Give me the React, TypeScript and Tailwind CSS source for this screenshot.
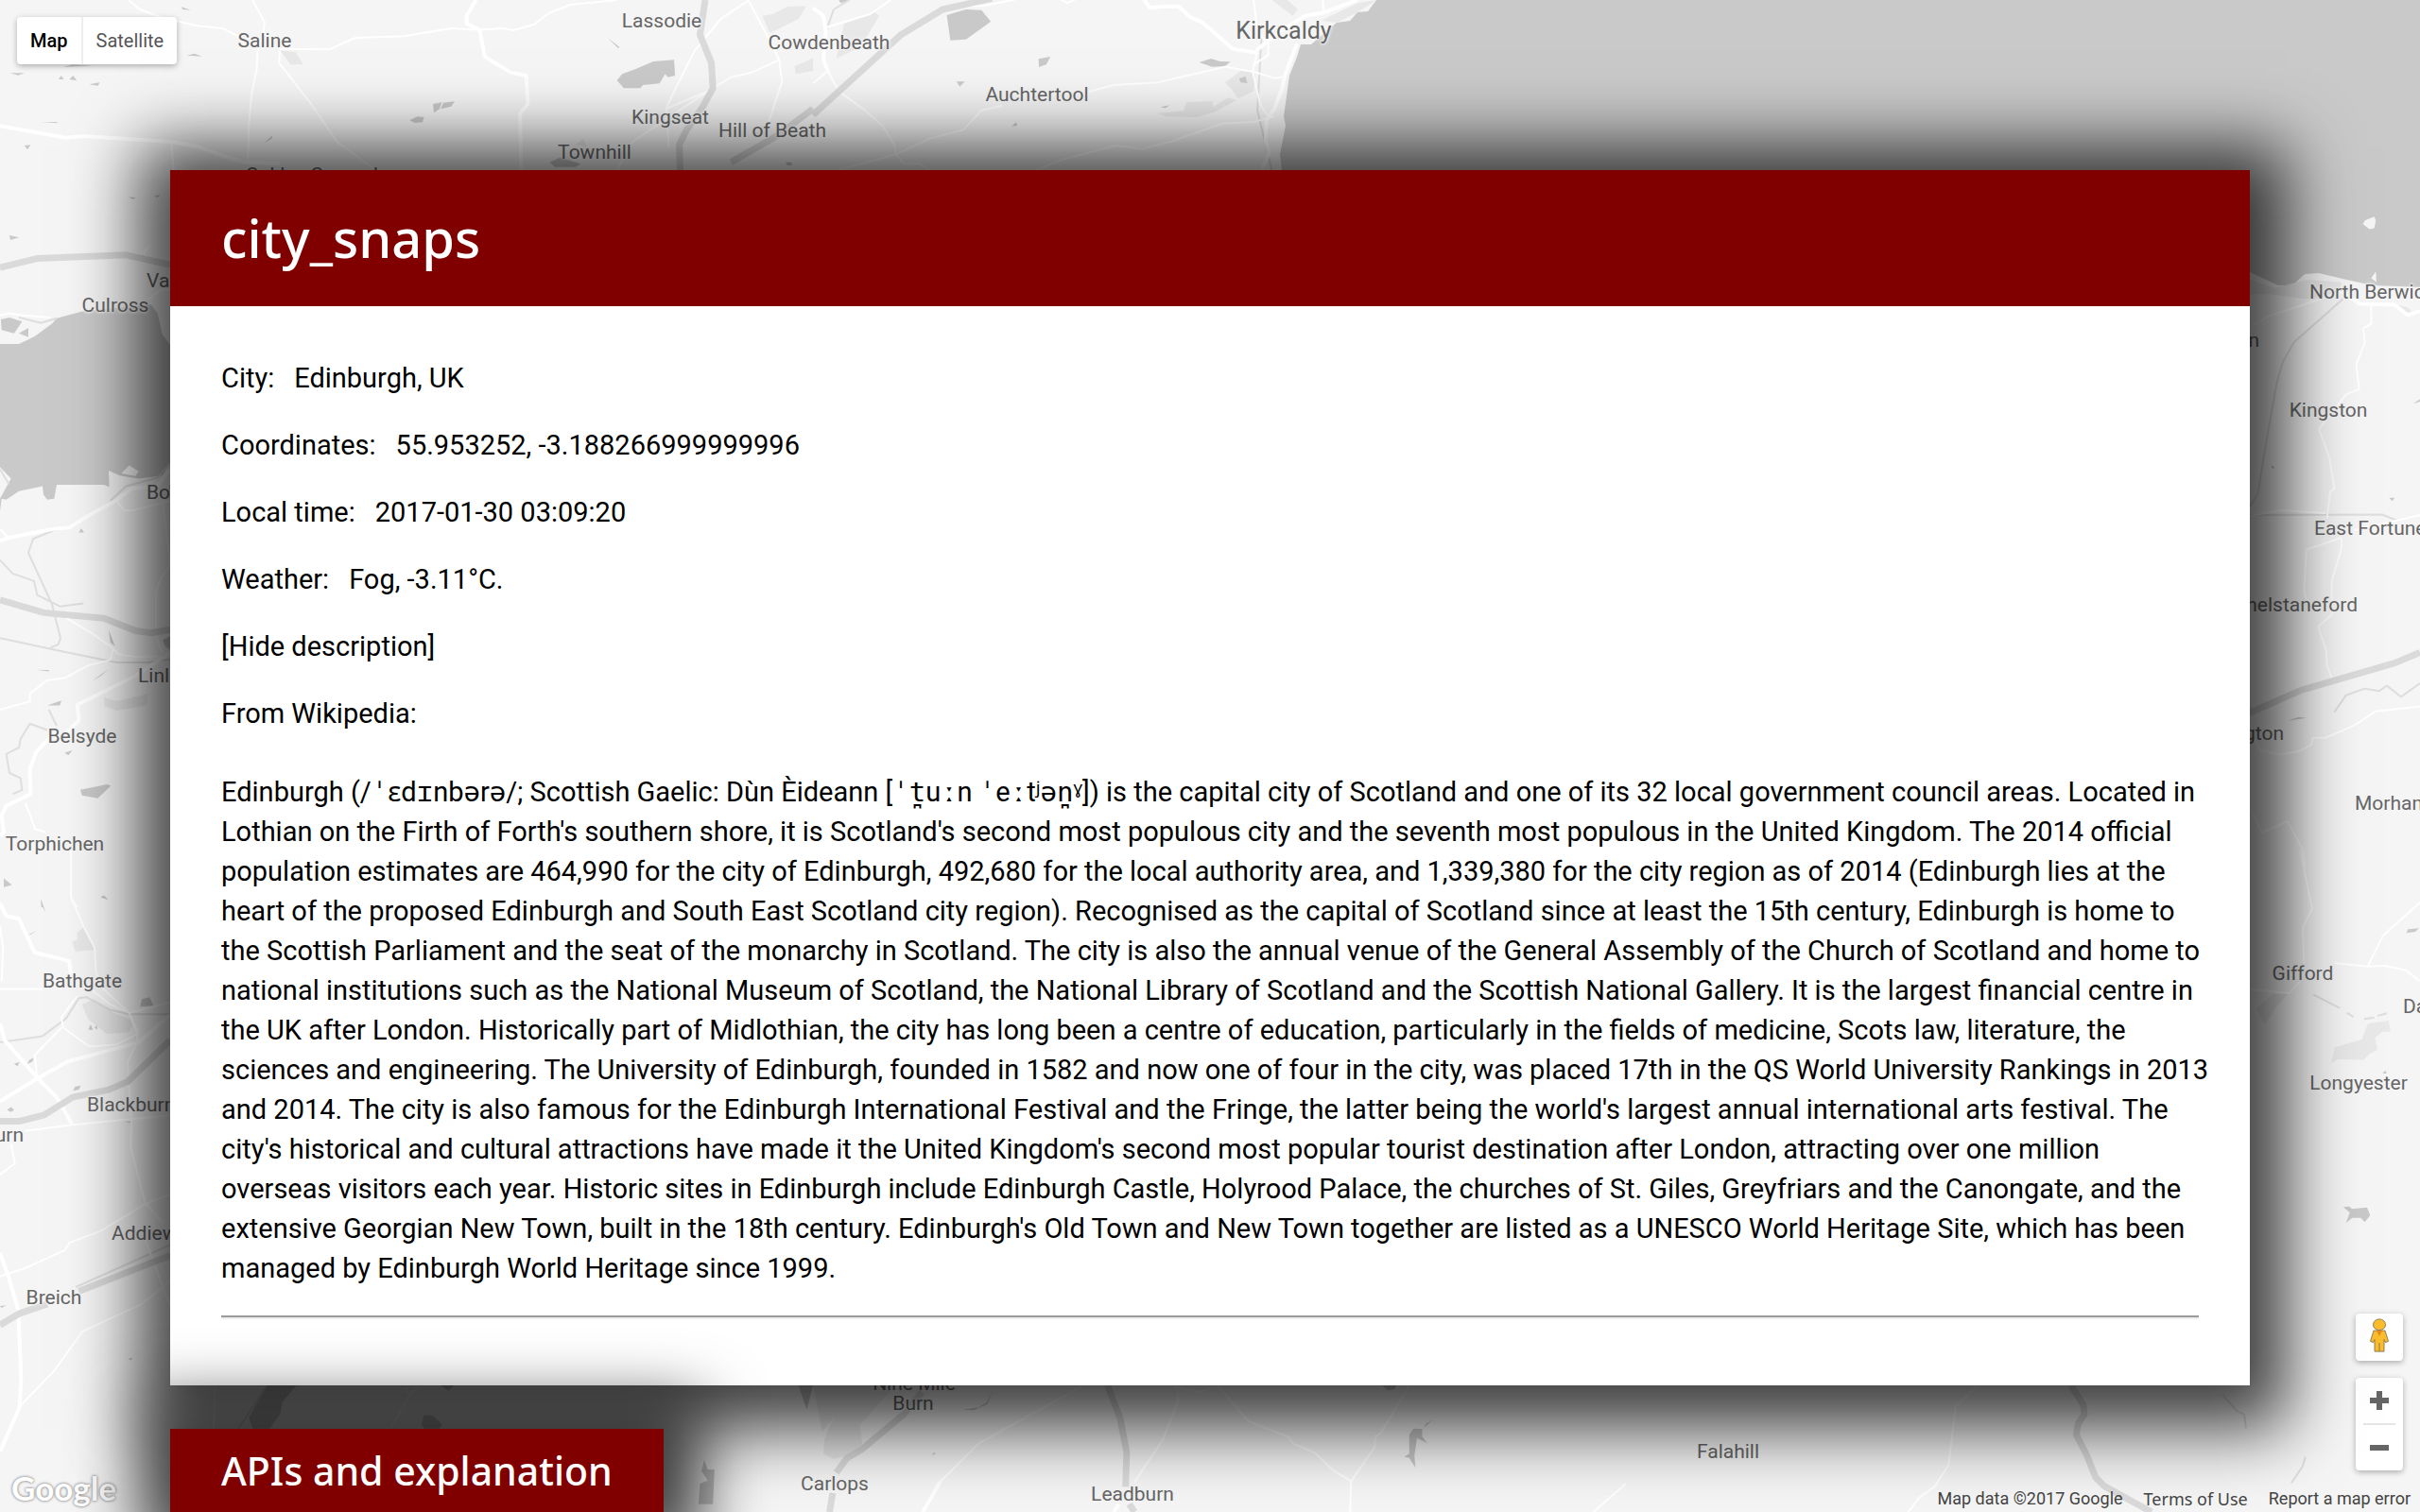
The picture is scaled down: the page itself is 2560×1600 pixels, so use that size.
import React from "react";

const facts = [
  ["City:", "Edinburgh, UK"],
  ["Coordinates:", "55.953252, -3.188266999999996"],
  ["Local time:", "2017-01-30 03:09:20"],
  ["Weather:", "Fog, -3.11°C."],
];

const pronunciation = "Edinburgh (/ˈɛdɪnbərə/; Scottish Gaelic: Dùn Èideann [ˈt̪uːn ˈeːtʲən̪ˠ])";

const description =
  " is the capital city of Scotland and one of its 32 local government council areas. Located in Lothian on the Firth of Forth's southern shore, it is Scotland's second most populous city and the seventh most populous in the United Kingdom. The 2014 official population estimates are 464,990 for the city of Edinburgh, 492,680 for the local authority area, and 1,339,380 for the city region as of 2014 (Edinburgh lies at the heart of the proposed Edinburgh and South East Scotland city region). Recognised as the capital of Scotland since at least the 15th century, Edinburgh is home to the Scottish Parliament and the seat of the monarchy in Scotland. The city is also the annual venue of the General Assembly of the Church of Scotland and home to national institutions such as the National Museum of Scotland, the National Library of Scotland and the Scottish National Gallery. It is the largest financial centre in the UK after London. Historically part of Midlothian, the city has long been a centre of education, particularly in the fields of medicine, Scots law, literature, the sciences and engineering. The University of Edinburgh, founded in 1582 and now one of four in the city, was placed 17th in the QS World University Rankings in 2013 and 2014. The city is also famous for the Edinburgh International Festival and the Fringe, the latter being the world's largest annual international arts festival. The city's historical and cultural attractions have made it the United Kingdom's second most popular tourist destination after London, attracting over one million overseas visitors each year. Historic sites in Edinburgh include Edinburgh Castle, Holyrood Palace, the churches of St. Giles, Greyfriars and the Canongate, and the extensive Georgian New Town, built in the 18th century. Edinburgh's Old Town and New Town together are listed as a UNESCO World Heritage Site, which has been managed by Edinburgh World Heritage since 1999.";

type Tile = {
  at: string;
  water?: string;
  land?: string;
  urban?: string;
  motorway?: string;
  road?: string;
  lane?: string;
  rail?: string;
};

const tiles: Tile[] = [
  {
    at: "translate(0 0) scale(.5485 .3333)",
    urban:
      "M1470 50L1490 45 1520 20 1555 20 1540 60 1510 85 1485 105ZM1532 210L1568 185V225L1535 235ZM540 160L570 165 585 205 560 205ZM1110 460L1125 440 1132 465Z",
    water:
      "M1190 255L1200 235 1225 220 1260 195 1300 190 1302 240 1288 245 1283 235 1272 265 1240 270 1235 280 1203 280ZM835 330L852 325 848 345 837 358ZM855 326L877 322 870 338 850 346ZM790 382L805 370 818 372 815 388 800 390ZM350 22L368 32 352 30ZM360 176L375 170 390 179ZM20 232L47 232 35 239ZM113 252L118 240 123 252ZM134 252L141 240 148 256ZM172 268L192 262 189 272ZM78 387L108 387 113 391ZM47 462L59 460 53 475ZM18 747L37 754 20 762ZM248 625L262 628 256 633ZM298 622L310 618 303 628ZM508 455L526 430 524 440ZM1172 120L1195 150 1192 153ZM1060 515L1080 500 1120 520 1110 530 1070 530ZM1515 515L1526 515 1528 525 1518 525ZM122 213L140 205 180 209 150 211Z",
    motorway: "M1360 0L1350 110 1372 200 1375 280 1355 340 1325 410 1310 460 1312 540M1568 345L1500 430 1410 515",
    road: "M918 0L900 50 900 75 925 95 935 180 985 230 1015 240 1018 330 1003 360 1005 540M0 400L125 437 160 432 330 450 380 465 430 495 470 515 540 520",
    lane: "M248 0L270 30 310 55 380 82 430 90 470 125M487 0L510 70 508 110 497 160 495 220 485 300 480 400 478 520M538 155L635 157 685 120 780 115 870 90 925 95M540 160L538 200 550 225 600 330 650 450 720 535M925 95L970 90 990 96 1030 78 1060 40 1100 15 1190 0M1445 0L1390 60 1340 160 1300 290 1285 345 1290 470M1445 5L1475 100 1503 190 1508 260 1490 350 1480 400M1503 190L1450 230 1410 245 1365 290 1285 345M330 450L335 540M1365 290L1220 450 1190 540",
  },
  {
    at: "translate(860 0) scale(.5485 .3333)",
    urban:
      "M825 225L853 228 850 290 820 312 808 285 795 262ZM665 360L715 352 720 325 770 320 772 340 800 310 817 318 775 355 740 372 680 370ZM60 75L120 40 128 50 110 100 90 150 45 185ZM980 65L1050 10 1087 0 1050 40 1010 72ZM885 0L915 0 935 30 925 50Z",
    water:
      "M258 48L295 30 325 32 343 68 325 90 295 125 265 128ZM745 198L768 186 785 195 805 196 795 210 770 212ZM435 187L458 180 450 205 436 213ZM277 259L293 259 283 275ZM50 0L72 0 53 10ZM383 402L392 388 394 398ZM670 340L688 334 680 343ZM822 250L834 242 838 264 825 262Z",
    motorway: "M345 -5L250 30 170 110 130 170 70 260 0 365",
    road: "M630 -20L650 25 680 20 705 20 728 55 750 70 810 155 857 168M933 140L910 240 905 280 890 345 875 380 873 445 880 485 865 540M855 160L900 100 950 50 985 40 1050 0M0 25L20 50 25 100 20 190 30 230",
    lane: "M30 230L50 290 100 350 135 400 157 460 160 490 175 520 205 520 225 540M20 90L60 70 110 45 150 0M0 265L25 230M275 20L330 18 400 -5M530 292L580 270 665 262 795 212 850 228 890 248 912 243M365 335L325 350 290 412 225 440 160 490 50 540M430 540L480 507 585 462 635 473 690 450 790 392 850 387 890 370M857 165L855 180 848 225 862 330 878 370M983 0L985 40M475 -5L490 10 510 -5M850 0L857 100 878 140 878 175 850 205",
    rail: "M865 120L857 350 885 540M70 0L40 30 25 100",
  },
  {
    at: "translate(2200 120) scale(.3333 .5102)",
    urban: "M540 345L620 362 720 345 830 350 830 370 720 385 600 375 540 375ZM990 395L1040 402 1055 412 1040 418Z",
    land: "M899 230L905 222 935 214 940 222 935 238 920 240ZM925 342L940 328 942 350Z",
    water:
      "M660 1260L695 1252 720 1254ZM607 730L620 733 612 738ZM982 797L1000 797 992 804ZM1058 602L1080 593V598Z",
    motorway: "M540 1243L700 1197 1000 1140 1080 1118",
    road: "M830 370L890 395 1000 397 1040 418 1080 410",
    lane: "M550 440L600 420 720 395 830 370M925 400L925 437 900 445 905 475 878 520 887 572 845 583 760 655 793 715 808 778 795 785 785 840M870 865L1080 833M830 880L720 905 712 990 720 1010M832 880L830 905 800 970 800 1040 757 1065 783 1115 785 1145 800 1172M540 1280L575 1322 640 1330 700 1322 735 1310 740 1295 780 1295 870 1270 940 1240 1080 1230M540 1440L580 1492 660 1468 710 1530 715 1568M540 835L640 823 780 829",
    rail: "M835 385L680 475 645 515 625 560 590 690 565 790 540 815M540 833L960 832 1010 845M808 1242L845 1207 905 1193 950 1198 975 1187 1020 1210 1080 1182",
  },
  {
    at: "translate(0 260) scale(.3333 .4464)",
    water:
      "M180 172L265 155 480 140 500 160 515 210 540 235 540 515 515 545 440 552 380 545 345 533 347 572 330 567 180 567 172 600 150 602 138 590 135 570 60 582 20 602 5 600 0 630V600L35 552 0 525V233L60 233 110 215 165 185ZM3 175L30 170 70 180 45 208 5 200ZM60 208L90 195 90 217ZM255 1290L340 1277 352 1280 310 1310 260 1303ZM205 1202L230 1196 217 1208ZM250 680L258 670 267 680ZM290 1033L345 1003 320 1020ZM150 1090L195 1078 190 1090ZM516 935L540 925V958L525 950ZM115 1005L155 1006 155 1009ZM12 1500L37 1515 12 1520ZM345 910L365 950 350 940ZM130 1550L138 1568H131ZM320 1545L330 1540 342 1550Z",
    land: "M385 540L410 521 440 535 430 546Z",
    urban: "M330 1070L370 1080 470 1062 465 1090 370 1102 332 1092Z",
    motorway: "M0 52L120 30 400 22 540 45M0 840L140 870 330 883 430 913 480 918 540 910",
    road: "M0 700L30 692 165 672 220 668 280 640 370 603 420 575 500 570 540 530M160 1165L115 1200 95 1240 97 1300 20 1328 5 1350 12 1390 0 1400M540 965L430 1020 245 1088 250 1125 215 1150",
    lane: "M0 672L30 695M370 605L395 628 420 628 540 605M205 880L290 918 360 955 375 968 430 975 540 972M0 1100L95 1080 95 1062 150 1030 205 1025 280 995 350 982 360 955M80 1320L112 1383 145 1390M225 1440L225 1545 245 1568M495 920L495 820 510 790 540 755M515 600L540 750M0 165L30 160 70 165 160 170M455 20L475 0M470 128L510 105 540 105M495 925L515 965",
    rail: "M350 605L400 570 500 550 540 515M220 668L170 675 105 695 90 728 165 850 192 930 185 945 160 953M0 930L200 962 370 988 470 988 540 980M0 745L40 777 108 795 118 828 190 855 265 848M150 1148L95 1133 65 1170 60 1190 20 1205 30 1250 65 1262 70 1290 40 1300M0 530L28 565M60 170L130 183 180 172M155 1100L180 1138",
  },
  {
    at: "translate(0 900) scale(.3333 .4464)",
    urban:
      "M260 365L300 352 360 385 430 405 410 430 340 435 280 400ZM245 195L265 182 300 235 260 238 240 240 228 215 245 212Z",
    water:
      "M445 370L450 352 475 348 487 368ZM232 570L238 560 257 557 250 567ZM85 507L95 495 107 492 103 500ZM45 505L62 502 55 512ZM22 615L35 608 45 615 35 620ZM12 68L37 82 12 87ZM130 115L145 147 132 130ZM320 110L330 107 342 115ZM280 425L288 412 295 425ZM300 420L307 414 310 425ZM90 200L117 190 100 198ZM0 1080L20 1078 5 1084ZM405 1205L420 1202 418 1208ZM395 642L420 643 410 646Z",
    motorway: "M0 642L60 642 140 627 230 585 345 567 405 548 540 450M0 1125L60 1098 150 1075M250 1045L540 960",
    road: "M0 125L20 155 60 162 110 242 220 262 225 295M0 410L15 450 120 540 180 585 228 648M0 595L120 540 215 500 440 455 540 390M0 955L25 1005 58 1090 67 1250 62 1320 0 1425",
    lane: "M225 0L225 110 265 180 300 230 305 290 330 330 410 385 540 360M0 180L10 235 5 310M0 328L135 328M245 345L195 395 200 420 285 465 370 460 435 435 410 385M410 385L438 430 435 455 405 500 408 545 417 640 415 705 445 790 460 835 520 885M195 420L110 485 118 540M80 665L230 650 540 628M35 695L47 742 0 768M0 1010L80 990 205 948 220 930 320 902 460 838 540 815M62 1318L170 1235 262 1140 450 1075 540 1020M460 920L540 1080M290 330L350 365 410 385",
    rail: "M0 455L135 440 210 398 250 350 275 348 350 378 410 388 540 388M240 1035L540 935",
  },
  {
    at: "translate(0 1440) scale(.5485 .3333)",
    water:
      "M515 78L572 78 545 130 540 170 520 215 487 215 480 180ZM818 172L835 175 852 200 848 215 818 215 813 200ZM1358 315L1365 345 1378 345 1375 455 1347 455 1350 390 1365 380 1353 350ZM1540 78L1568 78 1556 155ZM850 78L875 78 865 95Z",
    lane: "M810 78L790 110 755 210M415 78L412 215M780 85L790 108",
    rail: "M510 90L460 215",
  },
  {
    at: "translate(860 1440) scale(.5485 .3333)",
    urban:
      "M0 78L160 78 130 130 90 205 95 265 70 300 40 312 20 295 22 250 40 180 18 225Z",
    water:
      "M1150 235L1158 215 1175 216 1175 240 1185 262 1165 245 1160 300 1162 340 1150 308 1140 305 1150 295ZM1178 212L1182 200 1196 187ZM1098 78L1125 78 1122 90 1108 94ZM228 300L234 290 237 295ZM290 155L320 148 335 132 346 98 336 138 310 157Z",
    motorway: "M210 100L175 170 95 280 65 310 45 355M38 420L32 480M568 78L592 180 605 290 603 400M610 455L620 480",
    road: "M590 455L580 480M245 385L212 480",
    lane: "M520 80L320 262 245 385M700 78L705 125 675 250 620 385M705 85L745 100 770 85M780 78L840 192 918 242 925 262 968 292 1005 350 1038 382 1083 275 1085 240 1095 230 1150 78M1038 382L1036 480M1568 390L1505 480",
  },
  {
    at: "translate(1980 1340) scale(.37 .3333)",
    motorway: "M570 378L605 440 608 470 590 500 585 535 615 600 640 670 665 698 800 780",
    lane: "M305 378L240 445 220 630 180 700 135 735 105 780",
    rail: "M1005 410L1045 460 1065 470 1070 515M1240 605L1232 635 1200 688",
  },
  {
    at: "translate(2340 900) scale(.3333)",
    urban:
      "M378 675L390 625 475 600 495 550 560 540 567 575 540 575 517 595 525 632 500 645 480 665 400 662ZM140 500L195 455 240 455 205 495 168 555Z",
    water:
      "M417 1132L435 1130 445 1138 492 1133 502 1158 485 1180 472 1166 445 1166 425 1183 437 1150ZM617 262L622 250 657 247 645 258ZM541 708L550 698 554 708Z",
    lane: "M280 0L318 185 288 245 292 360M120 440L245 453 280 415M390 358L495 368 550 366 615 380 660 415M495 366L543 270 660 165",
    rail: "M322 458L405 500M428 515L448 528M483 535L515 530M525 525L555 517",
  },
];

type Place = { name: string; x: number; y: number; anchor?: "left" | "right"; big?: boolean };

const places: Place[] = [
  { name: "Saline", x: 280, y: 43 },
  { name: "Lassodie", x: 700, y: 22 },
  { name: "Cowdenbeath", x: 877, y: 45 },
  { name: "Kirkcaldy", x: 1358, y: 33, big: true },
  { name: "Auchtertool", x: 1097, y: 100 },
  { name: "Kingseat", x: 709, y: 124 },
  { name: "Hill of Beath", x: 817, y: 138 },
  { name: "Townhill", x: 629, y: 161 },
  { name: "Oakley", x: 291, y: 185 },
  { name: "Carnock", x: 367, y: 185 },
  { name: "Valleyfield", x: 155, y: 297, anchor: "left" },
  { name: "Culross", x: 122, y: 323 },
  { name: "Bo'ness", x: 155, y: 521, anchor: "left" },
  { name: "Linlithgow", x: 146, y: 715, anchor: "left" },
  { name: "Belsyde", x: 87, y: 779 },
  { name: "Torphichen", x: 58, y: 893 },
  { name: "Bathgate", x: 87, y: 1038 },
  { name: "Blackburn", x: 92, y: 1169, anchor: "left" },
  { name: "Whitburn", x: 25, y: 1201, anchor: "right" },
  { name: "Addiewell", x: 118, y: 1305, anchor: "left" },
  { name: "Breich", x: 57, y: 1373 },
  { name: "North Berwick", x: 2443, y: 309, anchor: "left" },
  { name: "Dirleton", x: 2390, y: 360, anchor: "right" },
  { name: "Kingston", x: 2463, y: 434 },
  { name: "East Fortune", x: 2448, y: 559, anchor: "left" },
  { name: "Athelstaneford", x: 2494, y: 640, anchor: "right" },
  { name: "Haddington", x: 2416, y: 776, anchor: "right" },
  { name: "Morham", x: 2491, y: 850, anchor: "left" },
  { name: "Gifford", x: 2436, y: 1030 },
  { name: "Danskine", x: 2542, y: 1065, anchor: "left" },
  { name: "Longyester", x: 2495, y: 1146 },
  { name: "Falahill", x: 1828, y: 1536 },
  { name: "Leadburn", x: 1198, y: 1581 },
  { name: "Carlops", x: 883, y: 1570 },
  { name: "Nine Mile", x: 967, y: 1464 },
  { name: "Burn", x: 966, y: 1485 },
];

function MapCanvas() {
  return (
    <div className="absolute inset-0 overflow-hidden bg-[#f5f5f5]">
      <svg
        className="absolute inset-0 h-full w-full"
        viewBox="0 0 2560 1600"
        preserveAspectRatio="xMidYMid slice"
        fill="none"
        strokeLinejoin="round"
        aria-hidden="true"
      >
        <path
          fill="#c9c9c9"
          d="M1456 0L1447 12 1436 13 1428 22 1414 24 1403 33 1387 47 1376 47 1372 60 1364 80 1358 123 1360 133 1354 163 1356 180 2000 260 2380 288 2410 302 2425 302 2438 290 2453 289 2478 295 2510 302 2560 304V0Z"
        />
        {tiles.map((t) => (
          <g key={t.at} transform={t.at}>
            {t.urban && <path d={t.urban} fill="#e8e8e8" />}
            {t.water && <path d={t.water} fill="#c9c9c9" />}
            {t.land && <path d={t.land} fill="#f5f5f5" />}
            {t.rail && <path d={t.rail} stroke="#dedede" strokeWidth="2" vectorEffect="non-scaling-stroke" />}
            {t.lane && <path d={t.lane} stroke="#ffffff" strokeWidth="2" vectorEffect="non-scaling-stroke" />}
            {t.road && <path d={t.road} stroke="#ffffff" strokeWidth="4" vectorEffect="non-scaling-stroke" />}
            {t.motorway && <path d={t.motorway} stroke="#dadada" strokeWidth="7" vectorEffect="non-scaling-stroke" />}
          </g>
        ))}
      </svg>
      {places.map((p) => (
        <span
          key={p.name}
          className={
            "absolute -translate-y-1/2 whitespace-nowrap text-[#666] [text-shadow:0_0_3px_#f5f5f5,0_0_3px_#f5f5f5,0_0_4px_#f5f5f5] " +
            (p.big ? "text-[25px] leading-[30px] " : "text-[21px] leading-[24px] ") +
            (p.anchor === "left" ? "" : p.anchor === "right" ? "-translate-x-full" : "-translate-x-1/2")
          }
          style={{ left: p.x, top: p.y }}
        >
          {p.name}
        </span>
      ))}
    </div>
  );
}

function Pegman() {
  return (
    <svg viewBox="0 0 20 40" className="h-9 w-5" preserveAspectRatio="none" aria-hidden="true">
      <path
        d="M4 14.500H16L19.500 27 16.500 28.500 15 25V39H5V25L3.500 28.500 .5 27Z"
        fill="#fbbd2c"
        stroke="#8b7a52"
        strokeWidth="1"
        strokeLinejoin="round"
      />
      <path d="M10 29V39" stroke="#8b7a52" strokeWidth="1" />
      <path d="M7 14.500H13L10 21Z" fill="#e88a1c" />
      <circle cx="10" cy="7.500" r="6.500" fill="#fbbd2c" stroke="#8b7a52" strokeWidth="1" />
    </svg>
  );
}

function MapControls() {
  return (
    <>
      <div className="absolute top-[18px] left-[18px] flex h-[50px] items-stretch rounded-sm bg-white text-xl shadow-[0_2px_6px_rgba(0,0,0,0.3)]">
        <button className="rounded-l-sm px-[14px] font-medium text-black">Map</button>
        <button className="rounded-r-sm border-l-2 border-[#eee] px-[14px] text-[#565656]">Satellite</button>
      </div>
      <div className="absolute right-[18px] bottom-11 flex w-[50px] flex-col gap-[18px]">
        <button
          aria-label="Street View"
          className="flex h-[50px] items-center justify-center rounded-sm bg-white pb-1 shadow-[0_2px_6px_rgba(0,0,0,0.3)]"
        >
          <Pegman />
        </button>
        <div className="flex h-[98px] flex-col items-center rounded-sm bg-white shadow-[0_2px_6px_rgba(0,0,0,0.3)]">
          <button aria-label="Zoom in" className="flex w-full flex-1 items-center justify-center">
            <svg viewBox="0 0 20 20" className="size-5" aria-hidden="true">
              <path d="M10 0V20M0 10H20" stroke="#666" strokeWidth="6" />
            </svg>
          </button>
          <div className="h-[2px] w-[34px] bg-[#e6e6e6]" />
          <button aria-label="Zoom out" className="flex w-full flex-1 items-center justify-center">
            <svg viewBox="0 0 20 20" className="size-5" aria-hidden="true">
              <path d="M0 10H20" stroke="#666" strokeWidth="6" />
            </svg>
          </button>
        </div>
      </div>
      <a
        href="#google"
        className="absolute bottom-1.5 left-3 font-['Lato'] text-[35px] leading-10 font-bold text-white [text-shadow:0_0_3px_#888,0_0_3px_#aaa]"
      >
        Google
      </a>
      <div className="absolute right-[10px] bottom-0 flex items-center gap-[22px] text-lg leading-7 text-[#444]">
        <span>Map data ©2017 Google</span>
        <a href="#terms" className="font-['Noto_Sans']">
          Terms of Use
        </a>
        <a href="#report">Report a map error</a>
      </div>
    </>
  );
}

/** Sets the phonetic signs in a fixed-width face; everything else keeps the body font. */
function Phonetic({ text }: { text: string }) {
  return (
    <>
      {text.split(/([tn]\u032a|[ˈɪəː])/).map((part, i) =>
        i % 2 ? (
          <span key={i} className="font-['DejaVu_Sans_Mono',monospace] leading-none">
            {part}
          </span>
        ) : (
          part
        ),
      )}
    </>
  );
}

export default function App() {
  return (
    <div className="relative h-screen overflow-hidden font-['Roboto','Noto_Sans',sans-serif] text-black">
      <MapCanvas />
      <MapControls />
      <main className="relative flex flex-col items-start gap-[46px] px-[180px] pt-[180px]">
        <section className="w-full bg-white shadow-[4px_10px_68px_36px_rgba(0,0,0,0.75)]">
          <header className="flex h-36 items-center bg-[#800000] px-[54px] pb-0.5">
            <h1 className="font-['Noto_Sans',sans-serif] text-[56px] leading-[72px] font-medium text-white">city_snaps</h1>
          </header>
          <div className="flex flex-col items-start px-[54px] pt-[55px] pb-[70px] text-[29px] leading-[42px]">
            <dl className="flex flex-col gap-[29px]">
              {facts.map(([label, value]) => (
                <div key={label} className="flex gap-[21px]">
                  <dt>{label}</dt>
                  <dd>{value}</dd>
                </div>
              ))}
            </dl>
            <button className="mt-[29px]">[Hide description]</button>
            <p className="mt-[29px]">From Wikipedia:</p>
            <p className="mt-[41px] -mr-4">
              <Phonetic text={pronunciation} />
              {description}
            </p>
            <hr className="mt-[29px] h-1 w-full border-t-2 border-b-2 border-t-[#9a9a9a] border-b-[#eee]" />
          </div>
        </section>
        <section className="bg-[#800000] px-[54px] py-[14px] shadow-[4px_10px_68px_36px_rgba(0,0,0,0.75)]">
          <h2 className="font-['Noto_Sans',sans-serif] text-[41px] leading-[60px] font-medium whitespace-nowrap text-white">
            APIs and explanation
          </h2>
        </section>
      </main>
    </div>
  );
}
